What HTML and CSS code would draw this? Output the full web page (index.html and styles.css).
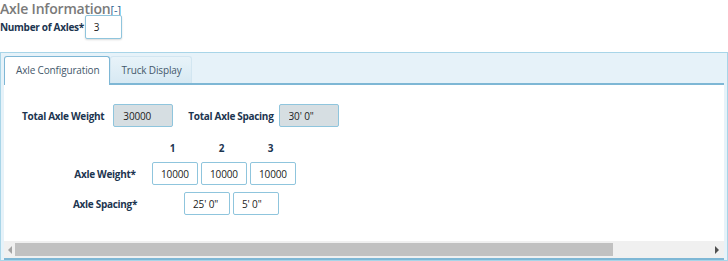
FILE: index.html
```html
<!DOCTYPE html>
<html lang="en">
<head>
    <meta charset="UTF-8">
    <title>Axle Information</title>
    <link rel="stylesheet" href="styles.css">
</head>
<body>

    <div class="heading">
        <span class="title">Axle Information</span><a class="toggle">[-]</a>
    </div>

    <div class="axle-count">
        <label>Number of Axles*</label>
        <input class="field count" type="text" value="3">
    </div>

    <!-- Tabs panel -->
    <div class="panel">
        <div class="tabs">
            <a class="tab active">Axle Configuration</a>
            <a class="tab">Truck Display</a>
        </div>

        <div class="tab-body">
            <div class="totals">
                <label>Total Axle Weight</label>
                <input class="field total" type="text" value="30000" readonly>
                <label>Total Axle Spacing</label>
                <input class="field total" type="text" value="30' 0&quot;" readonly>
            </div>

            <div class="grid">
                <div class="row heads">
                    <span class="row-label"></span>
                    <span class="col">1</span>
                    <span class="col">2</span>
                    <span class="col">3</span>
                </div>
                <div class="row">
                    <span class="row-label">Axle Weight*</span>
                    <input class="field cell" type="text" value="10000">
                    <input class="field cell" type="text" value="10000">
                    <input class="field cell" type="text" value="10000">
                </div>
                <div class="row spacing">
                    <span class="row-label">Axle Spacing*</span>
                    <input class="field cell" type="text" value="25' 0&quot;">
                    <input class="field cell" type="text" value="5' 0&quot;">
                </div>
            </div>
        </div>

        <div class="scrollbar">
            <span class="arrow left"></span>
            <div class="track"><div class="thumb"></div></div>
            <span class="arrow right"></span>
        </div>
    </div>

</body>
</html>
```

FILE: styles.css
```css
body {
    font-family: 'Open Sans', 'DejaVu Sans', sans-serif;
    font-size: 10px;
    letter-spacing: -0.15px;
    margin: 0;
    padding: 0;
    background: #fff;
    color: #222;
}
.heading {
    height: 15px;
    line-height: 17px;
    overflow: visible;
}
.title {
    font-size: 14px;
    font-weight: 600;
    color: #7a7a7a;
    letter-spacing: -0.2px;
}
.toggle {
    font-size: 11px;
    color: #2d5f8f;
    cursor: pointer;
}
.axle-count {
    display: flex;
    align-items: center;
    height: 23px;
}
label {
    font-weight: bold;
    color: #1c3550;
    font-size: 10px;
    letter-spacing: -0.3px;
}
.field {
    box-sizing: border-box;
    font-family: inherit;
    font-size: 10px;
    letter-spacing: -0.15px;
    color: #222;
    border: 1px solid #8fc5dd;
    border-radius: 2px;
    background: #fff;
    padding: 0 0 0 8px;
    outline: none;
}
.count {
    width: 37px;
    height: 24px;
    margin-left: 1px;
    box-shadow: 0 1px 2px rgba(0, 0, 0, 0.15);
}
.panel {
    margin-top: 14px;
    border: 1px solid #a8d5e8;
    background: #e6f2f9;
    padding: 3px 3px 0 3px;
}
.tabs {
    display: flex;
    align-items: flex-end;
    height: 27px;
    border-bottom: 2px solid #7eb7d5;
}
.tab {
    height: 26px;
    line-height: 26px;
    padding: 0 9px 0 10px;
    color: #44586b;
    font-size: 10px;
    cursor: pointer;
    background: linear-gradient(#e8f3f9, #d7e9f3);
    border: 1px solid #d2e6f1;
    border-bottom: none;
    border-radius: 3px 3px 0 0;
}
.tab.active {
    background: #fff;
    border-color: #7eb7d5;
    padding: 0 10px 0 11px;
    height: 28px;
    margin-bottom: -2px;
}
.tab-body {
    background: #fff;
    height: 156px;
    padding-top: 19px;
    box-sizing: border-box;
}
.totals {
    display: flex;
    align-items: center;
}
.totals label {
    margin-left: 18px;
    margin-right: 9px;
}
.totals label + .field + label {
    margin-left: 15px;
    margin-right: 5px;
}
.total {
    width: 60px;
    height: 23px;
    background: #d6dee2;
    padding-left: 9px;
}
.grid {
    margin-top: 14px;
    padding-left: 54px;
}
.row {
    display: flex;
    align-items: center;
    margin-bottom: 7px;
}
.row-label {
    width: 94px;
    text-align: center;
    font-weight: bold;
    color: #1c3550;
    letter-spacing: -0.3px;
}
.heads {
    margin-bottom: 7px;
}
.col {
    width: 49px;
    padding-right: 8px;
    box-sizing: border-box;
    text-align: center;
    font-weight: bold;
    color: #1c3550;
}
.cell {
    width: 46px;
    height: 23px;
    margin-right: 3px;
}
.spacing .cell:first-of-type {
    margin-left: 32px;
}
.scrollbar {
    display: flex;
    align-items: center;
    height: 17px;
    background: #f0f0f0;
    border-bottom: 2px solid #7eb7d5;
}
.arrow {
    width: 11px;
    height: 17px;
    position: relative;
}
.arrow::after {
    content: "";
    position: absolute;
    top: 5px;
    border-top: 4px solid transparent;
    border-bottom: 4px solid transparent;
}
.arrow.left::after {
    left: 4px;
    border-right: 4px solid #a3a3a3;
}
.arrow.right::after {
    left: 2px;
    border-left: 4px solid #505050;
}
.track {
    flex: 1;
    height: 13px;
}
.thumb {
    width: 598px;
    height: 13px;
    background: #c1c1c1;
}
```
